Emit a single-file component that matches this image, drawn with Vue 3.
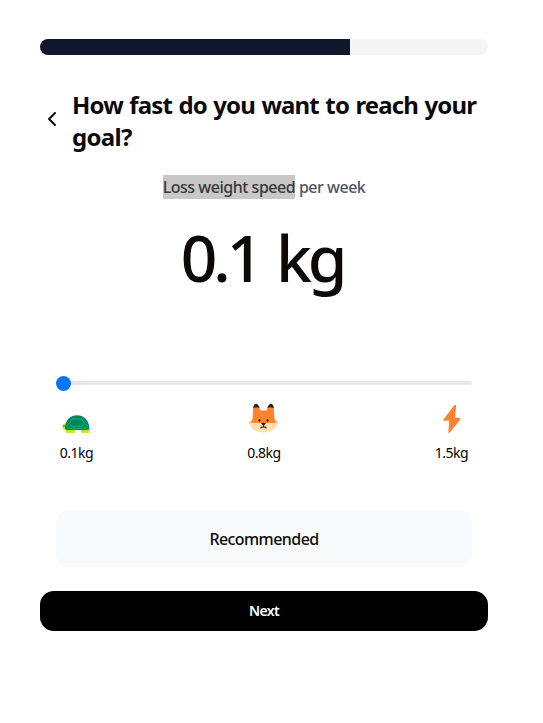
<script setup>
import { ref } from 'vue'

const progress = ref(69.3)
const speed = ref('0.1')
</script>

<template>
  <main class="page">
    <div class="progress">
      <div class="progress-fill" :style="{ width: progress + '%' }"></div>
    </div>

    <header class="heading">
      <button class="back" aria-label="Back">
        <svg width="24" height="24" viewBox="0 0 24 24" fill="none" stroke="currentColor" stroke-width="2" stroke-linecap="round" stroke-linejoin="round">
          <path d="m15 18-6-6 6-6" />
        </svg>
      </button>
      <h1><span class="line one">How fast do you want to reach your</span> <span class="line two">goal?</span></h1>
    </header>

    <section class="content">
      <p class="caption"><span class="selected">Loss weight speed</span><span class="rest"> per week</span></p>
      <p class="value"><span>{{ speed }} kg</span></p>

      <div class="slider">
        <div class="thumb"></div>
      </div>

      <div class="marks">
        <div class="mark">
          <svg class="icon" width="32" height="32" viewBox="0 0 32 32">
            <path d="M26 24.500q1.500 2.500 4.500 2.800-1 1.700-5 .7z" fill="#bde83b" />
            <path d="M6.500 21.500c-3-1-5.300.7-5.300 3.300 0 2.500 2 3.700 5.300 3.200z" fill="#bde83b" />
            <path d="M4.500 26h24v4q0 1-1 1h-6.500q-1 0-1-1v-2h-6v2q0 1-1 1h-7.500q-1 0-1-1z" fill="#bde83b" />
            <path d="M4 25.500C4.500 18 9.500 13.300 16 13.300S27.800 18 28.300 25.500q0 2.500-2.500 2.500H6.500Q4 28 4 25.500z" fill="#00865f" />
            <path d="M11 17h10l2.500 4.500-3 3h-9l-3-3zM6 26q10 1.200 20.500 0M8.500 21.500 5.500 24M23.500 21.500l3.500 2.500" fill="none" stroke="#18ad73" stroke-width="1" />
            <circle cx="3" cy="24" r=".7" fill="#284936" />
          </svg>
          <span class="label">0.1kg</span>
        </div>
        <div class="mark">
          <svg class="icon" width="32" height="32" viewBox="0 0 32 32">
            <path d="M4.500 17 5.200 6Q6 1.500 8.500 2.500q2.500 1.500 4 6h6q1.500-4.500 4-6 2.500-1 3.300 3.500l.7 11q.5 2.200 3.500 3.500Q26 29 15.500 29T1 20.500q3-1.300 3.500-3.500z" fill="#ff822d" />
            <path d="M5.200 6Q6 1.500 8.500 1.800q2 .9 3.200 4.200L8.500 5.200zM25.800 6Q25 1.500 22.500 1.800q-2 .9-3.200 4.200l3.200-.8z" fill="#231f20" />
            <path d="M1 20.300q5 1 8.500.5 3.200 0 6 1.400 2.800-1.400 6-1.400 3.500.5 8.500-.5Q27.500 30.500 15.500 30.500T1 20.300z" fill="#ffdfac" />
            <ellipse cx="11.500" cy="18.400" rx="1.050" ry="1.400" fill="#302621" />
            <ellipse cx="19.500" cy="18.400" rx="1.050" ry="1.400" fill="#302621" />
            <path d="M13 21.200q2.500-1 5 0l-1.800 2h-1.400z" fill="#211d1c" />
            <path d="M15.500 23v2M12.800 26.500q0-1.600 2.700-1.600t2.700 1.600" fill="none" stroke="#302621" stroke-width="1.100" />
          </svg>
          <span class="label">0.8kg</span>
        </div>
        <div class="mark">
          <svg class="icon" width="32" height="32" viewBox="0 0 32 32">
            <path d="M18.300 3.200 7.400 17.600q-.6 1.200.7 1.200h5.200l-1 11.500q.3 1.500 1.500.3L24.300 17.500q.7-1.500-.8-1.500h-4.400l1-12q-.5-1.900-1.800-.8z" fill="#ff822d" />
          </svg>
          <span class="label">1.5kg</span>
        </div>
      </div>

      <div class="tip"><span>Recommended</span></div>
    </section>

    <button class="next"><span>Next</span></button>
  </main>
</template>

<style>
body {
  background: #fff;
}
</style>

<style scoped>
.page {
  box-sizing: border-box;
  width: 528px;
  padding: 39px 40px;
  font-family: "Noto Sans", "Open Sans", sans-serif;
  color: #0c0a09;
}
.progress {
  height: 16px;
  overflow: hidden;
  border-radius: 8px;
  background: #f5f5f4;
}
.progress-fill {
  height: 100%;
  background: #0f172a;
}
.heading {
  display: flex;
  align-items: flex-start;
  gap: 8px;
  margin-top: 34px;
}
.back {
  display: flex;
  margin-top: 18px;
  padding: 0;
  border: 0;
  color: inherit;
  background: none;
}
h1 {
  margin: 0;
  font-size: 24px;
  line-height: 32px;
  font-weight: 700;
  white-space: nowrap;
}
.line {
  display: block;
}
.one {
  letter-spacing: -0.85px;
  word-spacing: 1px;
}
.two {
  letter-spacing: -0.7px;
}
.content {
  padding: 0 16px;
}
p {
  margin: 0;
  text-align: center;
  white-space: pre;
}
.caption {
  margin-top: 22px;
  font-size: 16px;
  line-height: 24px;
  font-weight: 500;
  letter-spacing: -0.48px;
  color: #4b5563;
}
.selected {
  display: inline-block;
  background: #c8c8c8;
  color: #36383b;
}
.value {
  margin-top: 27px;
  padding-right: 4px;
  font-size: 64px;
  line-height: 64px;
  font-weight: 500;
  letter-spacing: -4px;
  word-spacing: 4px;
}
.slider {
  display: flex;
  align-items: center;
  height: 4px;
  margin-top: 91px;
  border-radius: 2px;
  background: #e5e7eb;
}
.thumb {
  flex: none;
  width: 15px;
  height: 15px;
  border-radius: 50%;
  background: #0075ff;
}
.marks {
  display: flex;
  justify-content: space-between;
  margin-top: 17px;
  padding: 0 4px;
}
.mark {
  display: flex;
  flex-direction: column;
  align-items: center;
  width: 33px;
}
.icon {
  display: block;
}
.label {
  margin-top: 9px;
  font-size: 14px;
  line-height: 20px;
  letter-spacing: -0.5px;
  white-space: nowrap;
  color: #000;
}
.tip {
  display: flex;
  align-items: center;
  justify-content: center;
  height: 56px;
  margin-top: 48px;
  border-radius: 12px;
  background: #f8fafc;
  font-size: 16px;
  font-weight: 500;
  letter-spacing: -0.57px;
}
.next {
  display: flex;
  align-items: center;
  justify-content: center;
  width: 100%;
  height: 40px;
  margin-top: 24px;
  padding: 0;
  border: 0;
  border-radius: 14px;
  background: #000;
  color: #fff;
  font: 600 14px/20px "Noto Sans", "Open Sans", sans-serif;
  letter-spacing: -0.6px;
}
</style>
